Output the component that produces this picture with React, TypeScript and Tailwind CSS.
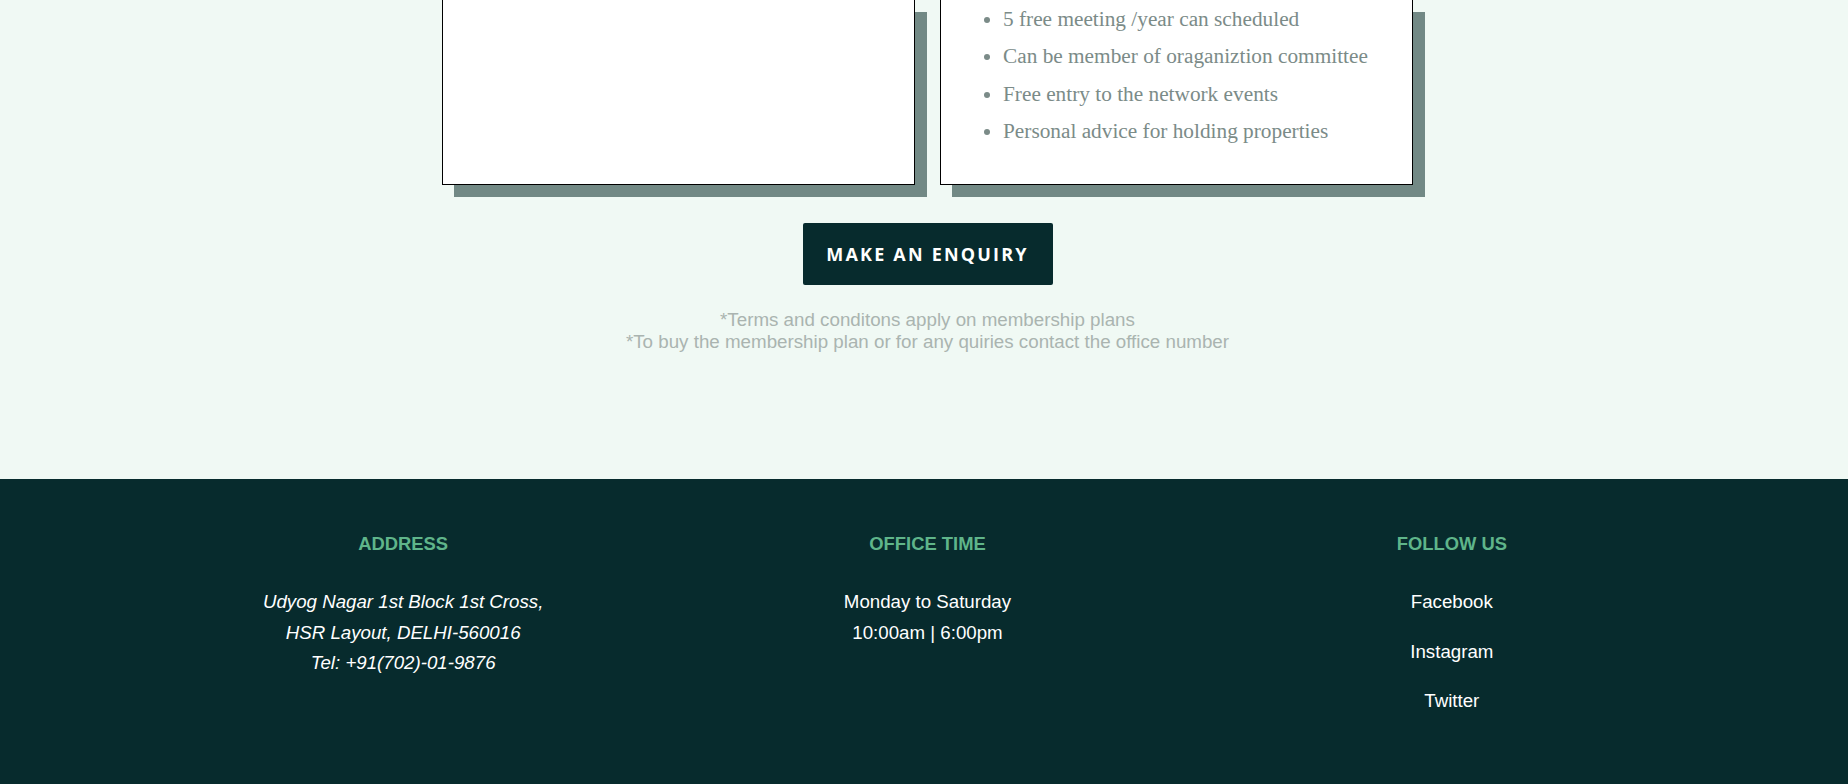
import React from "react";

const perks = [
  "5 free meeting /year can scheduled",
  "Can be member of oraganiztion committee",
  "Free entry to the network events",
  "Personal advice for holding properties",
];

const FooterCol = ({ title, children }: { title: string; children: React.ReactNode }) => (
  <div className="flex flex-col items-center text-center">
    <h3 className="text-[18.4px] font-bold leading-[21px] text-[#5fb58a]">{title}</h3>
    <div className="mt-[33px] flex flex-col items-center">{children}</div>
  </div>
);

export default function App() {
  return (
    <div className="min-h-screen w-full font-['Liberation_Sans',Arial,sans-serif]">
      <section className="bg-[#f0f9f4] h-[479px] flex flex-col items-center">
        <div className="flex gap-[25px] pl-[7px]">
          <div className="w-[473px] h-[185px] bg-white border border-t-0 border-black shadow-[12px_12px_0_#728985]"></div>
          <div className="w-[473px] h-[185px] bg-white border border-t-0 border-black shadow-[12px_12px_0_#728985]">
            <ul className="list-disc pt-[1px] pl-[62px] font-['Liberation_Serif','Times_New_Roman',serif] text-[21.3px] leading-[37.3px] text-[#7b8b88] marker:text-[#7b8b88]">
              {perks.map((p) => (
                <li key={p}>{p}</li>
              ))}
            </ul>
          </div>
        </div>

        <button className="mt-[38px] ml-[7px] w-[250px] h-[62px] rounded-[2px] bg-[#072b2d] text-white font-['Open_Sans',sans-serif] font-bold text-[18px] tracking-[2.2px]">
          MAKE AN ENQUIRY
        </button>

        <div className="mt-[24px] ml-[7px] text-center text-[18.75px] leading-[22.4px] text-[#aab4b0]">
          <p>*Terms and conditons apply on membership plans</p>
          <p>*To buy the membership plan or for any quiries contact the office number</p>
        </div>
      </section>

      <footer className="bg-[#072b2d] h-[305px] grid grid-cols-3 pl-[141px] pr-[134px] pt-[54px]">
        <FooterCol title="ADDRESS">
          <div className="italic text-white text-[18.7px] leading-[30.6px]">
            <p>Udyog Nagar 1st Block 1st Cross,</p>
            <p>HSR Layout, DELHI-560016</p>
            <p>Tel: +91(702)-01-9876</p>
          </div>
        </FooterCol>
        <FooterCol title="OFFICE TIME">
          <div className="text-white text-[18.7px] leading-[30.6px]">
            <p>Monday to Saturday</p>
            <p>10:00am | 6:00pm</p>
          </div>
        </FooterCol>
        <FooterCol title="FOLLOW US">
          <div className="flex flex-col items-center gap-[19px] text-white text-[18.7px] leading-[30.6px]">
            <a href="#">Facebook</a>
            <a href="#">Instagram</a>
            <a href="#">Twitter</a>
          </div>
        </FooterCol>
      </footer>
    </div>
  );
}
